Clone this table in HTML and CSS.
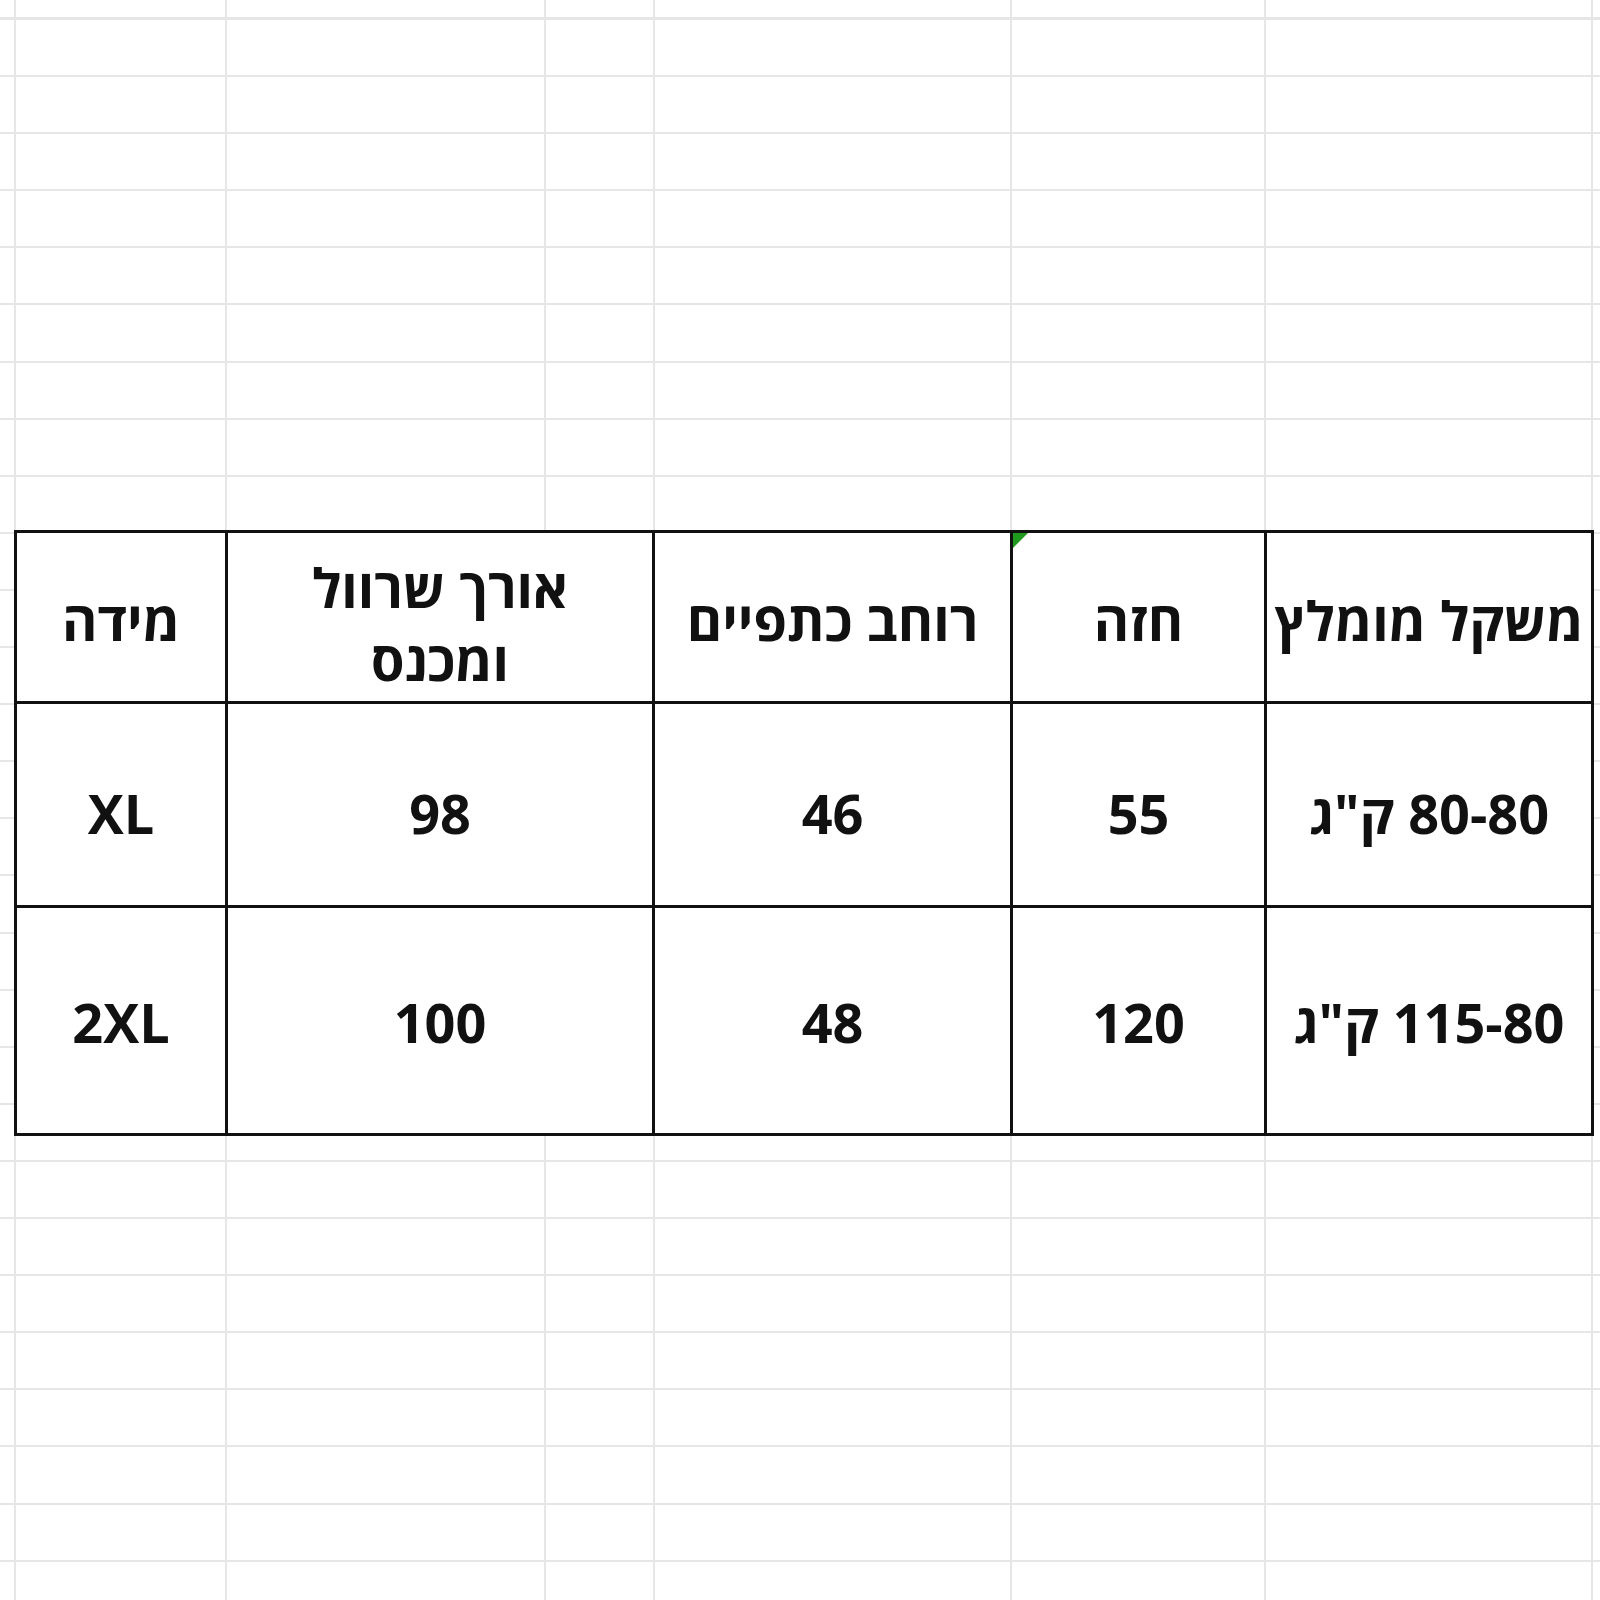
FILE: index.html
```html
<!DOCTYPE html>
<html lang="he">
<head>
<meta charset="utf-8">
<title>טבלת מידות</title>
<link rel="stylesheet" href="styles.css">
</head>
<body>
<div class="sheet">
  <div class="size-table" dir="rtl">
    <div class="cell head">משקל מומלץ</div>
    <div class="cell head marked">חזה</div>
    <div class="cell head">רוחב כתפיים</div>
    <div class="cell head two">אורך שרוול<br>ומכנס</div>
    <div class="cell head">מידה</div>

    <div class="cell r1">80-80 ק"ג</div>
    <div class="cell r1">55</div>
    <div class="cell r1">46</div>
    <div class="cell r1">98</div>
    <div class="cell r1">XL</div>

    <div class="cell r2">115-80 ק"ג</div>
    <div class="cell r2">120</div>
    <div class="cell r2">48</div>
    <div class="cell r2">100</div>
    <div class="cell r2">2XL</div>
  </div>
</div>
</body>
</html>
```
FILE: styles.css
```css
html, body {
  margin: 0;
  padding: 0;
}

body {
  width: 1600px;
  height: 1600px;
  overflow: hidden;
  background-color: #ffffff;
  background-image:
    linear-gradient(#e6e6e6, #e6e6e6),
    linear-gradient(#e6e6e6, #e6e6e6),
    linear-gradient(#e6e6e6, #e6e6e6),
    linear-gradient(#e6e6e6, #e6e6e6),
    linear-gradient(#e6e6e6, #e6e6e6),
    linear-gradient(#e6e6e6, #e6e6e6),
    linear-gradient(#e6e6e6, #e6e6e6),
    repeating-linear-gradient(180deg, #e6e6e6 0 2px, transparent 2px 57.1px);
  background-size:
    2px 100%, 2px 100%, 2px 100%, 2px 100%, 2px 100%, 2px 100%, 2px 100%,
    100% 100%;
  background-position:
    14px 0, 225px 0, 544px 0, 653px 0, 1010px 0, 1264px 0, 1591px 0,
    0 18px;
  background-repeat: no-repeat, no-repeat, no-repeat, no-repeat, no-repeat, no-repeat, no-repeat, repeat;
  font-family: "Open Sans", "Liberation Sans", "DejaVu Sans", sans-serif;
  color: #111111;
}

.sheet {
  padding: 530px 0 0 14px;
}

.size-table {
  display: grid;
  grid-template-columns: 324px 251px 355px 424px 208px;
  grid-template-rows: 168px 201px 225px;
  gap: 3px;
  padding: 3px;
  width: max-content;
  background: #111111;
}

.cell {
  position: relative;
  background: #ffffff;
  display: flex;
  align-items: center;
  justify-content: center;
  text-align: center;
  font-size: 54px;
  font-weight: 700;
  line-height: 73px;
  box-sizing: border-box;
}

.head {
  padding-top: 6px;
}

.head.two {
  padding-top: 14px;
}

.r1 {
  padding-top: 18px;
}

.r2 {
  padding-top: 4px;
}

.marked::before {
  content: "";
  position: absolute;
  left: 0;
  top: 0;
  width: 0;
  height: 0;
  border-top: 15px solid #1f9a1f;
  border-right: 15px solid transparent;
}
```
